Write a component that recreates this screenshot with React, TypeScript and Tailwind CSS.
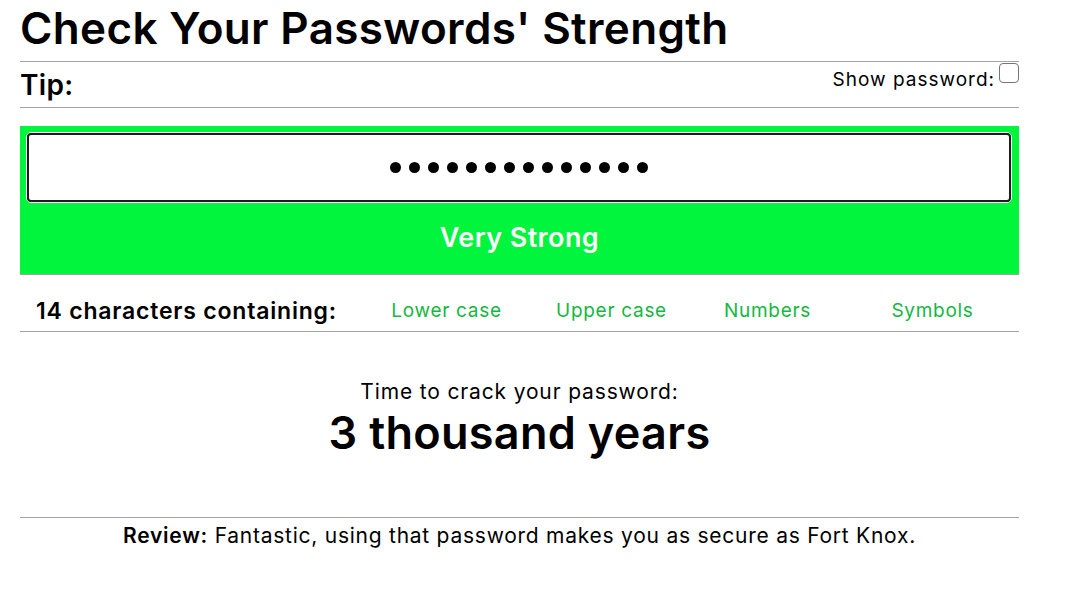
import { useState } from "react";

const traits = ["Lower case", "Upper case", "Numbers", "Symbols"];
const secret = "Tr0ub4dor&3xyz";

export default function App() {
  const [show, setShow] = useState(false);

  return (
    <div className="min-h-screen bg-white font-['Inter','Open_Sans',sans-serif] text-black">
      <div className="w-[999px] ml-[20px]">
        {/* heading */}
        <h1 className="text-[44px] font-semibold leading-[56px] tracking-[0.35px]">
          Check Your Passwords' Strength
        </h1>
        <div className="border-t border-[#a3a3a3] mt-[5px]" />

        {/* tip + toggle */}
        <div className="flex justify-between h-[45px]">
          <p className="text-[28px] font-semibold leading-none pt-[9px] tracking-[0.3px]">Tip:</p>
          <label className="flex items-start gap-[4px] text-[19px] leading-none pt-[1px] tracking-[1px]">
            <span className="pt-[7px]">Show password:</span>
            <button
              onClick={() => setShow(!show)}
              className="w-[20px] h-[20px] border border-[#767676] rounded-[4px] bg-white"
            />
          </label>
        </div>
        <div className="border-t border-[#a3a3a3]" />

        {/* meter */}
        <div className="mt-[18px] bg-[#00f53c] border-b border-[#a3a3a3] pt-[6px]">
          <div className="ml-[6px] mr-[7px] rounded-[5px] border border-white">
            <div className="h-[69px] rounded-[4px] border-[2px] border-[#1c1c1c] bg-white flex items-center justify-center">
              {show ? (
                <span className="text-[22px] tracking-[2px]">{secret}</span>
              ) : (
                <div className="flex gap-[8px]">
                  {secret.split("").map((_, i) => (
                    <span key={i} className="w-[11px] h-[11px] rounded-full bg-black" />
                  ))}
                </div>
              )}
            </div>
          </div>
          <p className="h-[71px] flex items-center justify-center text-white text-[27px] font-semibold tracking-[0.4px]">
            Very Strong
          </p>
        </div>

        {/* composition */}
        <div className="grid grid-cols-[339px_175px_155px_157px_173px] items-center h-[57px] pt-[19px] pb-[6px] border-b border-[#a3a3a3]">
          <p className="pl-[16px] text-[23px] font-semibold tracking-[0.8px]">14 characters containing:</p>
          {traits.map((t) => (
            <p key={t} className="text-center text-[19px] tracking-[0.7px] text-[#13b83f]">
              {t}
            </p>
          ))}
        </div>

        {/* crack time */}
        <div className="text-center pt-[46px] h-[185px]">
          <p className="text-[21px] leading-[28px] tracking-[0.85px]">Time to crack your password:</p>
          <p className="text-[45px] font-semibold leading-[54px] tracking-[0.3px]">3 thousand years</p>
        </div>

        <div className="border-t border-[#a3a3a3]" />
        <p className="text-center text-[21px] leading-[34px] pt-[1px] tracking-[0.75px]">
          <span className="font-semibold">Review:</span> Fantastic, using that password makes you as secure as Fort Knox.
        </p>
      </div>
    </div>
  );
}
